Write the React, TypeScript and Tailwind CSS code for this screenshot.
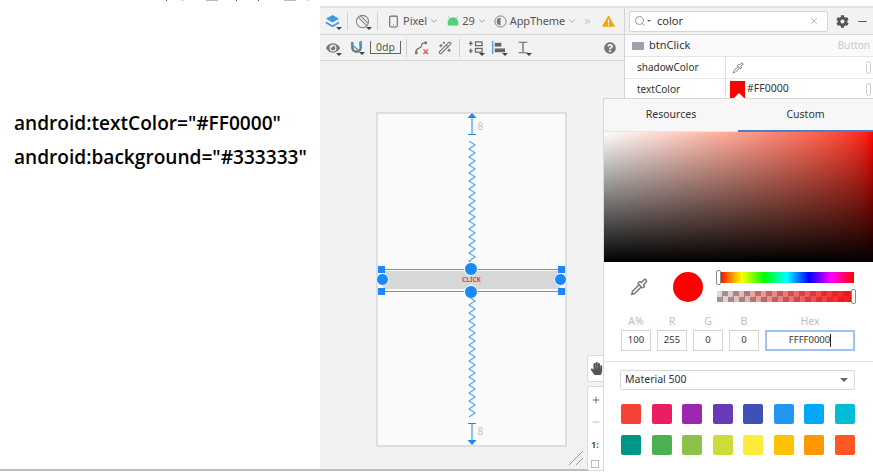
import { useMemo } from 'react';
import { FaCog, FaEye, FaHandPaper, FaQuestionCircle } from 'react-icons/fa';
import { ChevronDown, ChevronsRight, Search, X, Minus, Plus, Smartphone, Pipette, Wand2 } from 'lucide-react';

const swatches = [
  '#F44336', '#E91E63', '#9C27B0', '#673AB7', '#3F51B5', '#2196F3', '#03A9F4', '#00BCD4',
  '#009688', '#4CAF50', '#8BC34A', '#CDDC39', '#FFEB3B', '#FFC107', '#FF9800', '#FF5722',
];

function Caret() {
  return <span className="absolute right-[-2px] bottom-[-1px] w-0 h-0 border-x-[3px] border-x-transparent border-t-[3px] border-t-[#444]" />;
}

function Sep() {
  return <div className="w-px h-[18px] bg-[#d0d0d0]" />;
}

function Spring({ height }: { height: number }) {
  const points = useMemo(() => {
    const out: string[] = [];
    const n = Math.floor(height / 4);
    for (let i = 0; i <= n; i++) out.push(`${i % 2 ? 8 : 2},${i * 4}`);
    return out.join(' ');
  }, [height]);
  return (
    <svg width="10" height={height} className="block">
      <polyline points={points} fill="none" stroke="#5aa5f5" strokeWidth="1.2" />
    </svg>
  );
}

function ArrowEnd({ flip }: { flip?: boolean }) {
  return (
    <svg width="14" height="22" className={flip ? 'block rotate-180' : 'block'}>
      <path d="M7 0 L11.5 5 L2.5 5 Z" fill="#1e88f5" />
      <path d="M7 4 V21 M3 21.5 H11" stroke="#1e88f5" strokeWidth="1" fill="none" />
    </svg>
  );
}

function Field({ label, value, wide, active }: { label: string; value: string; wide?: boolean; active?: boolean }) {
  return (
    <div className={wide ? 'flex flex-col items-center w-[90px]' : 'flex flex-col items-center w-[30px]'}>
      <span className="text-[10.5px] leading-[16px] text-[#bdbdbd] h-[17px]">{label}</span>
      <div className={
        active
          ? 'w-full h-[21px] flex items-center justify-center text-[9.5px] text-[#333] bg-white border-2 border-[#9cc4ee]'
          : 'w-full h-[21px] flex items-center justify-center text-[9.5px] text-[#333] bg-white border border-[#d4d4d4]'
      }>
        {value}
        {active && <span className="w-px h-[13px] bg-[#222]" />}
      </div>
    </div>
  );
}

function Handle({ className }: { className: string }) {
  return <span className={`absolute bg-[#1e88f5] ${className}`} />;
}

export default function App() {
  return (
    <div className="relative w-[873px] h-[473px] overflow-hidden bg-white flex font-['Noto_Sans',sans-serif] text-[#333]">
      {/* cut off line of text above the capture */}
      <div className="absolute left-[166px] top-0 h-px flex">
        <span className="w-px bg-[#555]" />
        <span className="w-[3px] ml-[14px] bg-[#ddd]" />
        <span className="w-[12px] ml-[22px] bg-[#bbb]" />
        <span className="w-px ml-[18px] bg-[#555]" />
        <span className="w-px ml-[21px] bg-[#555]" />
        <span className="w-[12px] ml-[25px] bg-[#bbb]" />
        <span className="w-[3px] ml-[11px] bg-[#ddd]" />
      </div>

      {/* left note */}
      <div className="w-[320px] shrink-0 pl-[14px] pt-[109px] text-[19.1px] font-semibold text-black font-['Open_Sans','Noto_Sans',sans-serif]">
        <div className="h-[28px] leading-[28px] whitespace-nowrap">android:textColor="#FF0000"</div>
        <div className="h-[41px] leading-[41px] whitespace-nowrap">android:background="#333333"</div>
      </div>

      <div className="flex-1 flex flex-col pt-[6px] pb-[2px]">
        <div className="flex-1 flex flex-col bg-[#f2f2f2] border-t-2 border-[#e2e2e2] min-h-0">
          <div className="flex flex-1 min-h-0">
            {/* editor */}
            <div className="w-[305px] shrink-0 flex flex-col border-r border-[#d4d4d4]">
              <div className="h-[27px] flex items-center pl-[5px] border-b border-[#d8d8d8] text-[11px] text-[#555]">
                <span className="relative w-[15px] h-[15px]">
                  <svg viewBox="0 0 16 16" className="w-[15px] h-[15px]">
                    <path d="M8 1 L15 5 L8 9 L1 5 Z" fill="#3f9ae0" />
                    <path d="M1 8 L8 12 L15 8 V10 L8 14 L1 10 Z" fill="#3f9ae0" />
                  </svg>
                  <Caret />
                </span>
                <span className="mx-[7px]"><Sep /></span>
                <span className="relative w-[15px] h-[15px] mr-[7px]">
                  <svg viewBox="0 0 16 16" className="w-[15px] h-[15px]" fill="none" stroke="#888" strokeWidth="1.2">
                    <circle cx="8" cy="8" r="6.5" />
                    <path d="M3 3 L13 13 M6 2 L14 10" />
                  </svg>
                  <Caret />
                </span>
                <Sep />
                <Smartphone size={13} className="ml-[9px] text-[#666]" />
                <span className="ml-[3px]">Pixel</span>
                <ChevronDown size={10} className="ml-[2px] text-[#999]" />
                <svg viewBox="0 0 16 12" className="w-[12px] h-[10px] ml-[8px]">
                  <path d="M1 8 A7 7 0 0 1 15 8 Z" fill="#4fd07a" />
                  <rect x="1" y="7" width="14" height="5" fill="#4fd07a" />
                  <path d="M4 3 L2 0 M12 3 L14 0" stroke="#4fd07a" strokeWidth="1" />
                </svg>
                <span className="ml-[3px]">29</span>
                <ChevronDown size={10} className="ml-[2px] text-[#999]" />
                <svg viewBox="0 0 14 14" className="w-[13px] h-[13px] ml-[7px]">
                  <circle cx="7" cy="7" r="6" fill="none" stroke="#777" />
                  <path d="M7 3 A4 4 0 0 0 7 11 Z" fill="#777" />
                </svg>
                <span className="ml-[3px] tracking-[-0.1px]">AppTheme</span>
                <ChevronDown size={10} className="ml-[2px] text-[#999]" />
                <ChevronsRight size={9} className="ml-[6px] text-[#999]" />
                <svg viewBox="0 0 16 14" className="w-[13px] h-[12px] ml-[10px]">
                  <path d="M8 0 L16 14 H0 Z" fill="#f0a30a" />
                  <rect x="7.2" y="5" width="1.6" height="5" fill="#fff" />
                  <rect x="7.2" y="11" width="1.6" height="1.6" fill="#fff" />
                </svg>
              </div>
              <div className="h-[26px] flex items-center pl-[6px] border-b border-[#d8d8d8] text-[11px] text-[#555]">
                <span className="relative">
                  <FaEye size={14} className="text-[#777]" />
                  <Caret />
                </span>
                <span className="relative ml-[10px]">
                  <svg viewBox="0 0 14 14" className="w-[13px] h-[13px]">
                    <path d="M2.5 1 V7 A4.5 4.5 0 0 0 11.5 7 V1" fill="none" stroke="#777" strokeWidth="2.6" />
                    <path d="M1 3 L9 10" stroke="#3f9ae0" strokeWidth="1.4" />
                    <path d="M11.5 0 V6" stroke="#3f9ae0" strokeWidth="2.6" />
                  </svg>
                  <Caret />
                </span>
                <span className="ml-[7px] w-[31px] h-[13px] flex items-center justify-center border-b border-x border-[#666] text-[10.5px] leading-none">0dp</span>
                <span className="mx-[5px]"><Sep /></span>
                <svg viewBox="0 0 16 16" className="w-[15px] h-[15px] ml-[2px]" fill="none">
                  <path d="M2 13 C2 7 8 10 8 6 C8 3 10 3 12 3" stroke="#777" strokeWidth="1.4" />
                  <circle cx="12.5" cy="3" r="1.6" fill="#777" />
                  <circle cx="2.5" cy="13.5" r="1.6" fill="#777" />
                  <path d="M10 10 L15 15 M15 10 L10 15" stroke="#e05555" strokeWidth="1.4" />
                </svg>
                <Wand2 size={14} className="ml-[9px] text-[#777]" />
                <span className="mx-[7px]"><Sep /></span>
                <span className="relative ml-[1px]">
                  <svg viewBox="0 0 16 16" className="w-[15px] h-[15px]" fill="none" stroke="#666" strokeWidth="1.3">
                    <path d="M3 1 V6 M1 3.5 H5 M3 9 V14 M1 11.5 H5" />
                    <rect x="8" y="2" width="7" height="4" />
                    <rect x="8" y="9" width="7" height="4" />
                  </svg>
                  <Caret />
                </span>
                <span className="relative ml-[8px]">
                  <svg viewBox="0 0 16 16" className="w-[15px] h-[15px]">
                    <rect x="1" y="1" width="1.6" height="14" fill="#5aa5e0" />
                    <rect x="4" y="3" width="7" height="4" fill="#666" />
                    <rect x="4" y="9" width="11" height="4" fill="#666" />
                  </svg>
                  <Caret />
                </span>
                <span className="relative ml-[10px]">
                  <svg viewBox="0 0 16 16" className="w-[14px] h-[15px]" fill="none" stroke="#666" strokeWidth="1.4">
                    <path d="M3 2 H13 M8 2 V13 M3 14 H13" />
                  </svg>
                  <Caret />
                </span>
                <FaQuestionCircle size={12} className="ml-auto mr-[8px] text-[#777]" />
              </div>

              {/* canvas */}
              <div className="flex-1 pl-[56px] pt-[51px]">
                <div className="relative w-[191px] h-[335px] bg-[#fafafa] border-2 border-[#dedede] flex flex-col items-center">
                  <div className="relative flex flex-col items-center -mt-[1px]">
                    <ArrowEnd />
                    <span className="absolute left-[13px] top-[6px] text-[10px] text-[#c4c4c4]">8</span>
                    <span className="mt-[6px]"><Spring height={128} /></span>
                  </div>
                  <div className="relative w-[185px] h-[23px] border-y border-[#4b9df2] px-[4px] pt-[1px] pb-[2px]">
                    <div className="relative h-full bg-[#d6d7d7] flex items-center justify-center text-[6.5px] font-bold text-[#f23a3a]">
                      CLICK
                      <span className="absolute left-[3px] top-[4px] w-px h-[9px] bg-[#4b9df2]" />
                      <span className="absolute right-[3px] top-[4px] w-px h-[9px] bg-[#4b9df2]" />
                    </div>
                    <Handle className="w-[7px] h-[7px] left-[-1px] top-[-4px]" />
                    <Handle className="w-[7px] h-[7px] right-[-1px] top-[-4px]" />
                    <Handle className="w-[7px] h-[7px] left-[-1px] bottom-[-4px]" />
                    <Handle className="w-[7px] h-[7px] right-[-1px] bottom-[-4px]" />
                    <Handle className="w-[13px] h-[13px] rounded-full border border-white left-[-3px] top-[3px]" />
                    <Handle className="w-[13px] h-[13px] rounded-full border border-white right-[-3px] top-[3px]" />
                    <Handle className="w-[14px] h-[14px] rounded-full border border-white left-[85px] top-[-8px]" />
                    <Handle className="w-[14px] h-[14px] rounded-full border border-white left-[85px] bottom-[-8px]" />
                  </div>
                  <div className="relative flex flex-col items-center mt-[5px]">
                    <Spring height={121} />
                    <span className="mt-[5px]"><ArrowEnd flip /></span>
                    <span className="absolute left-[13px] bottom-[6px] text-[10px] text-[#c4c4c4]">8</span>
                  </div>
                </div>
              </div>
            </div>

            {/* attributes */}
            <div className="flex-1 flex flex-col bg-white min-w-0">
              <div className="h-[27px] flex items-center pl-[4px] bg-[#f2f2f2] border-b border-[#d8d8d8]">
                <div className="w-[199px] h-[21px] flex items-center px-[4px] bg-white border border-[#d6d6d6] rounded-[2px] text-[11px]">
                  <Search size={12} className="text-[#999]" />
                  <span className="ml-px w-0 h-0 border-x-[2px] border-x-transparent border-t-[2px] border-t-[#666]" />
                  <span className="ml-[6px]">color</span>
                  <X size={10} className="ml-auto mr-[4px] text-[#aaa]" />
                </div>
                <FaCog size={13} className="ml-[8px] text-[#555]" />
                <Minus size={13} className="ml-[7px] text-[#555]" />
              </div>
              <div className="h-[22px] flex items-center pl-[7px] pr-[3px] bg-[#fafafa] border-b border-[#e4e4e4] text-[11px]">
                <span className="w-[12px] h-[8px] bg-[#9aa3ad] rounded-[1px]" />
                <span className="ml-[5px]">btnClick</span>
                <span className="ml-auto text-[10px] text-[#c8c8c8]">Button</span>
              </div>
              <div className="h-[22px] flex items-center border-b border-[#e8e8e8] text-[10px]">
                <span className="w-[101px] pl-[12px] border-r border-[#e0e0e0] h-full flex items-center">shadowColor</span>
                <Pipette size={12} className="ml-[6px] text-[#777]" />
                <span className="ml-auto mr-[2px] w-[5px] h-[13px] border border-[#ccc] rounded-full" />
              </div>
              <div className="h-[20px] flex items-center text-[10px]">
                <span className="w-[101px] pl-[12px] border-r border-[#e0e0e0] h-full flex items-center">textColor</span>
                <span className="ml-[4px] self-end w-[15px] h-[18px] bg-[#ff0000]" />
                <span className="ml-[2px] text-[10.5px]">#FF0000</span>
                <span className="ml-auto mr-[2px] w-[5px] h-[13px] border border-[#ccc] rounded-full" />
              </div>
            </div>
          </div>
        </div>
        <div className="h-[2px] bg-[#bdbdbd] mt-auto -ml-[320px]" />
      </div>

      {/* zoom controls */}
      <div className="absolute left-[587px] top-[355px] w-[20px] h-[27px] flex items-center pl-[2px] bg-white border border-[#dadada] rounded-[3px]">
        <FaHandPaper size={13} className="text-[#555]" />
      </div>
      <div className="absolute left-[587px] top-[386px] w-[20px] h-[85px] flex flex-col pl-[3px] bg-white border border-[#dadada] rounded-[3px] text-[9px] font-bold text-[#555]">
        <Plus size={10} className="mt-[8px]" />
        <Minus size={10} className="mt-[12px] text-[#aaa]" />
        <span className="mt-[11px]">1:</span>
        <span className="mt-[8px] w-[8px] h-[8px] border border-[#bbb]" />
      </div>

      {/* canvas resize grip */}
      <svg width="20" height="20" className="absolute left-[568px] top-[449px]">
        <path d="M1 16 L15 2 M8 16 L15 9" stroke="#999" strokeWidth="1" />
      </svg>

      {/* color picker popup */}
      <div className="absolute left-[603px] top-[98px] w-[270px] h-[373px] bg-white border-l border-t border-[#d8d8d8] flex flex-col text-[#333]">
        <span className="absolute left-[129px] top-[-6px] w-0 h-0 border-x-[6px] border-x-transparent border-b-[6px] border-b-white" />
        <div className="h-[33px] flex text-[10.5px] shrink-0">
          <div className="w-[134px] flex items-center justify-center bg-[#f7f7f7] border-b border-[#e4e4e4]">Resources</div>
          <div className="flex-1 flex items-center justify-center bg-[#f7f7f7] border-b-[2px] border-[#4a80c9]">Custom</div>
        </div>
        <div className="h-[130px] shrink-0 bg-gradient-to-r from-white to-[#ff0000]">
          <div className="h-full bg-gradient-to-b from-transparent to-black" />
        </div>
        <div className="h-[51px] flex shrink-0 pl-[26px] pt-[10px]">
          <Pipette size={18} className="mt-[6px] text-[#777]" />
          <div className="w-[30px] h-[30px] rounded-full bg-[#ff0000] ml-[25px]" />
          <div className="ml-[14px] w-[137px] flex flex-col gap-[8px]">
            <div className="relative h-[11px] ml-[2px] bg-[linear-gradient(to_right,#f00,#ff0,#0f0,#0ff,#00f,#f0f,#f00)]">
              <span className="absolute left-[-3px] top-[-2px] w-[5px] h-[15px] bg-white border border-[#888] rounded-[2px]" />
            </div>
            <div className="relative h-[11px] bg-[linear-gradient(to_right,rgba(255,0,0,0),rgba(255,0,0,0.9)),repeating-conic-gradient(#999_0_25%,#ddd_0_50%)] bg-[length:100%_100%,11px_11px]">
              <span className="absolute right-[-2px] top-[-2px] w-[5px] h-[15px] bg-white border border-[#888] rounded-[2px]" />
            </div>
          </div>
        </div>
        <div className="flex gap-[6px] pl-[17px] pb-[10px] border-b border-[#e2e2e2] shrink-0">
          <Field label="A%" value="100" />
          <Field label="R" value="255" />
          <Field label="G" value="0" />
          <Field label="B" value="0" />
          <Field label="Hex" value="FFFF0000" wide active />
        </div>
        <div className="ml-[16px] mr-[18px] mt-[8px] h-[20px] flex items-center px-[4px] border border-[#d8d8d8] rounded-[2px] text-[10.5px] shrink-0">
          Material 500
          <span className="ml-auto mr-[2px] w-0 h-0 border-x-[4px] border-x-transparent border-t-[4px] border-t-[#666]" />
        </div>
        <div className="grid grid-cols-[repeat(8,20px)] gap-x-[10.5px] gap-y-[11px] pl-[17px] pt-[14px]">
          {swatches.map((c) => (
            <div key={c} className="w-[20px] h-[20px] rounded-[2px]" style={{ backgroundColor: c }} />
          ))}
        </div>
      </div>
    </div>
  );
}
